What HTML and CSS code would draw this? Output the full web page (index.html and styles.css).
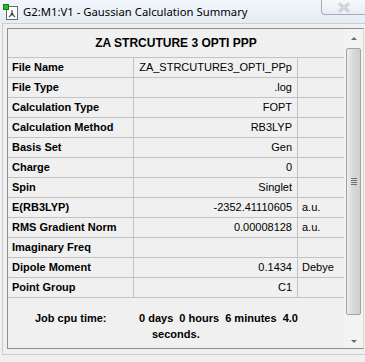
FILE: index.html
```html
<!DOCTYPE html>
<html lang="en">
<head>
  <meta charset="UTF-8" />
  <title>G2:M1:V1 - Gaussian Calculation Summary</title>
  <link rel="stylesheet" href="styles.css">
</head>
<body>
  <div class="window">
    <header class="titlebar">
      <svg class="app-icon" width="16" height="16" viewBox="0 0 16 16">
        <rect x="3.5" y="2.5" width="11" height="13" fill="#fff" stroke="#6b6b6b"/>
        <rect x="0.5" y="0.5" width="5" height="5" fill="#1fbf2a" stroke="#127a18" stroke-width="1"/>
        <line x1="9" y1="6" x2="9" y2="10" stroke="#555" stroke-width="1.2"/>
        <line x1="9" y1="10" x2="6" y2="13" stroke="#555" stroke-width="1.2"/>
        <line x1="9" y1="10" x2="12" y2="13" stroke="#555" stroke-width="1.2"/>
        <circle cx="9" cy="10" r="1.3" fill="#3a3a3a"/>
      </svg>
      <span class="title">G2:M1:V1 - Gaussian Calculation Summary</span>
      <button class="close" aria-label="Close">
        <svg width="14" height="11" viewBox="0 0 14 11">
          <path d="M2 1.5 L12 9.5 M12 1.5 L2 9.5" stroke="#b3b9c2" stroke-width="2.6" fill="none"/>
          <path d="M2 1.5 L12 9.5 M12 1.5 L2 9.5" stroke="#f4f6f9" stroke-width="1" fill="none"/>
        </svg>
      </button>
    </header>

    <div class="frame">
      <div class="summary">
        <div class="content">
          <div class="heading">ZA STRCUTURE 3 OPTI PPP</div>

          <div class="row"><span class="label">File Name</span><span class="value">ZA_STRCUTURE3_OPTI_PPp</span><span class="unit"></span></div>
          <div class="row"><span class="label">File Type</span><span class="value">.log</span><span class="unit"></span></div>
          <div class="row"><span class="label">Calculation Type</span><span class="value">FOPT</span><span class="unit"></span></div>
          <div class="row"><span class="label">Calculation Method</span><span class="value">RB3LYP</span><span class="unit"></span></div>
          <div class="row"><span class="label">Basis Set</span><span class="value">Gen</span><span class="unit"></span></div>
          <div class="row"><span class="label">Charge</span><span class="value">0</span><span class="unit"></span></div>
          <div class="row"><span class="label">Spin</span><span class="value">Singlet</span><span class="unit"></span></div>
          <div class="row"><span class="label">E(RB3LYP)</span><span class="value">-2352.41110605</span><span class="unit">a.u.</span></div>
          <div class="row"><span class="label">RMS Gradient Norm</span><span class="value">0.00008128</span><span class="unit">a.u.</span></div>
          <div class="row"><span class="label">Imaginary Freq</span><span class="value"></span><span class="unit"></span></div>
          <div class="row"><span class="label">Dipole Moment</span><span class="value">0.1434</span><span class="unit">Debye</span></div>
          <div class="row"><span class="label">Point Group</span><span class="value">C1</span><span class="unit"></span></div>

          <div class="cpu">
            <span class="cpu-label">Job cpu time:</span>
            <span class="cpu-value">0 days&nbsp; 0 hours&nbsp; 6 minutes&nbsp; 4.0<br><span class="cpu-wrap">seconds.</span></span>
          </div>
        </div>

        <div class="scrollbar">
          <div class="arrow up"></div>
          <div class="thumb"><span class="grip"></span></div>
          <div class="arrow down"></div>
        </div>
      </div>
    </div>
  </div>
</body>
</html>
```

FILE: styles.css
```css
body {
  margin: 0;
  background: #eef3f9;
  font-family: "Liberation Sans", Arial, sans-serif;
  font-size: 11px;
  color: #000;
}

.window {
  width: 365px;
  height: 362px;
  overflow: hidden;
  background: #f0f0f0;
}

.titlebar {
  display: flex;
  align-items: flex-start;
  height: 23px;
  background: linear-gradient(#f2f6fb, #e4ecf5);
}

.app-icon {
  margin: 4px 0 0 3px;
}

.title {
  margin: 3px 0 0 4px;
  font-family: "Noto Sans", "Open Sans", sans-serif;
  font-size: 11.3px;
  line-height: 17px;
  color: #000;
}

.close {
  margin-left: auto;
  width: 44px;
  height: 15px;
  padding: 0;
  border: 1px solid #a5adb8;
  border-top: none;
  border-right: none;
  border-radius: 0 0 0 4px;
  background: linear-gradient(#f6f8fb, #e8edf3);
  display: flex;
  align-items: center;
  justify-content: center;
}

.frame {
  margin-left: 2px;
  padding: 4px 0 0 4px;
  border-top: 1px solid #c9cdd2;
  border-left: 1px solid #c9cdd2;
  height: 326px;
  border-bottom: 1px solid #c9cdd2;
}

.summary {
  display: flex;
  width: 355px;
  height: 319px;
  border: 1px solid #8e8f8f;
  border-right-color: #d8d8d8;
  background: #f0f0f0;
}

.content {
  flex: 1;
}

.heading {
  height: 28px;
  line-height: 29px;
  text-align: center;
  font-size: 12px;
  font-weight: bold;
  border-bottom: 1px solid #c3c3c3;
}

.row {
  display: grid;
  grid-template-columns: 126px 164px 1fr;
  height: 19px;
  line-height: 19px;
  border-bottom: 1px solid #c3c3c3;
}

.label {
  padding-left: 4px;
  font-weight: bold;
  border-right: 1px solid #c3c3c3;
}

.value {
  padding-right: 5px;
  text-align: right;
  border-right: 1px solid #c3c3c3;
}

.unit {
  padding-left: 4px;
}

.cpu {
  display: flex;
  padding-top: 12px;
  font-weight: bold;
  line-height: 16px;
}

.cpu-label {
  margin-left: 27px;
  width: 104px;
}

.cpu-wrap {
  margin-left: 13px;
}

.scrollbar {
  width: 19px;
  display: flex;
  flex-direction: column;
  align-items: center;
  background: #f3f3f3;
}

.arrow {
  width: 0;
  height: 0;
  border-left: 3px solid transparent;
  border-right: 3px solid transparent;
}

.arrow.up {
  margin: 8px 0 8px;
  border-bottom: 3px solid #6a6a6a;
}

.arrow.down {
  margin-top: 25px;
  border-top: 3px solid #6a6a6a;
}

.thumb {
  width: 13px;
  height: 265px;
  border: 1px solid #a2a2a2;
  border-radius: 2px;
  background: linear-gradient(to right, #eeeeee, #dadada 45%, #cfcfcf);
  display: flex;
  align-items: center;
  justify-content: center;
}

.grip {
  width: 6px;
  height: 7px;
  background: repeating-linear-gradient(#707070 0 1px, transparent 1px 2px);
}
```
